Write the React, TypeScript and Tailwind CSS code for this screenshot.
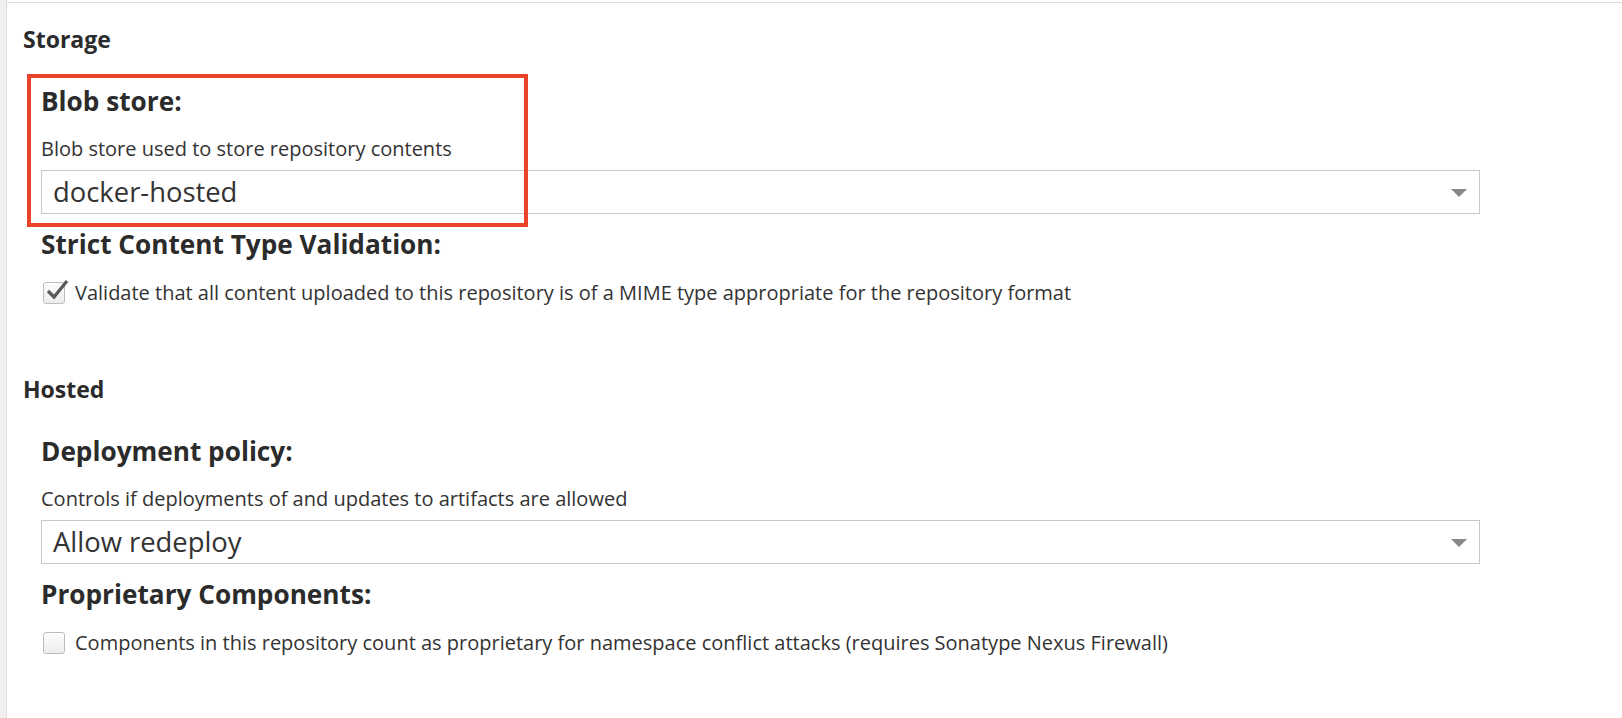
import React from "react";

const font = { fontFamily: "'Open Sans', Lato, 'Liberation Sans', sans-serif" };

const Select = ({ value }: { value: string }) => (
  <div className="relative flex items-center h-[44px] w-[1439px] border border-[#c8c8c8] bg-white pl-[11px]">
    <span className="text-[27.4px] leading-none text-[#333]">{value}</span>
    <svg
      className="absolute right-[12px] top-[18px]"
      width="16"
      height="8"
      viewBox="0 0 16 8"
    >
      <path d="M0 0 H16 L8 8 Z" fill="#888" />
    </svg>
  </div>
);

const Checkbox = ({ checked, label }: { checked?: boolean; label: string }) => (
  <div className="flex items-center h-[24px] mt-[22px] ml-[2px]">
    <div className="relative w-[22px] h-[22px] rounded-[3px] border border-[#bdbdbd] bg-gradient-to-b from-[#fdfdfd] to-[#ececec] shrink-0">
      {checked && (
        <svg
          className="absolute -top-[6px] left-[1px]"
          width="24"
          height="24"
          viewBox="0 0 24 24"
        >
          <path
            d="M3 14 L9 20 L22 4"
            fill="none"
            stroke="#5a5a5a"
            strokeWidth="3.2"
          />
        </svg>
      )}
    </div>
    <span className="ml-[10px] text-[20px] text-[#333] leading-[24px]">
      {label}
    </span>
  </div>
);

const App = () => {
  return (
    <div className="min-h-screen w-full bg-white flex" style={font}>
      <div className="w-[7px] shrink-0 bg-[#f0f0f0] border-r border-[#dcdcdc]" />
      <div className="flex-1 mt-[2px] border-t border-[#dcdcdc] pl-[16px] pt-[24px] pb-[40px]">
        {/* Storage */}
        <section>
          <h2 className="text-[23px] leading-[24px] font-bold text-[#2b2b2b]">
            Storage
          </h2>
          <div className="relative ml-[18px] mt-[35px]">
            <div className="absolute -left-[14px] -top-[12px] w-[501px] h-[153px] border-[4px] border-[#e9432a] pointer-events-none z-10" />
            <h3 className="text-[26.2px] leading-[30px] font-bold text-[#2b2b2b]">
              Blob store:
            </h3>
            <p className="mt-[21px] text-[20px] leading-[24px] text-[#333]">
              Blob store used to store repository contents
            </p>
            <div className="mt-[9px]">
              <Select value="docker-hosted" />
            </div>
          </div>
          <div className="ml-[18px] mt-[15px]">
            <h3 className="text-[26.2px] leading-[30px] font-bold text-[#2b2b2b]">
              Strict Content Type Validation:
            </h3>
            <Checkbox
              checked
              label="Validate that all content uploaded to this repository is of a MIME type appropriate for the repository format"
            />
          </div>
        </section>

        {/* Hosted */}
        <section className="mt-[72px]">
          <h2 className="text-[23px] leading-[24px] font-bold text-[#2b2b2b]">
            Hosted
          </h2>
          <div className="ml-[18px] mt-[35px]">
            <h3 className="text-[26.2px] leading-[30px] font-bold text-[#2b2b2b]">
              Deployment policy:
            </h3>
            <p className="mt-[21px] text-[20px] leading-[24px] text-[#333]">
              Controls if deployments of and updates to artifacts are allowed
            </p>
            <div className="mt-[9px]">
              <Select value="Allow redeploy" />
            </div>
          </div>
          <div className="ml-[18px] mt-[15px]">
            <h3 className="text-[26.2px] leading-[30px] font-bold text-[#2b2b2b]">
              Proprietary Components:
            </h3>
            <Checkbox label="Components in this repository count as proprietary for namespace conflict attacks (requires Sonatype Nexus Firewall)" />
          </div>
        </section>
      </div>
    </div>
  );
};

export default App;
